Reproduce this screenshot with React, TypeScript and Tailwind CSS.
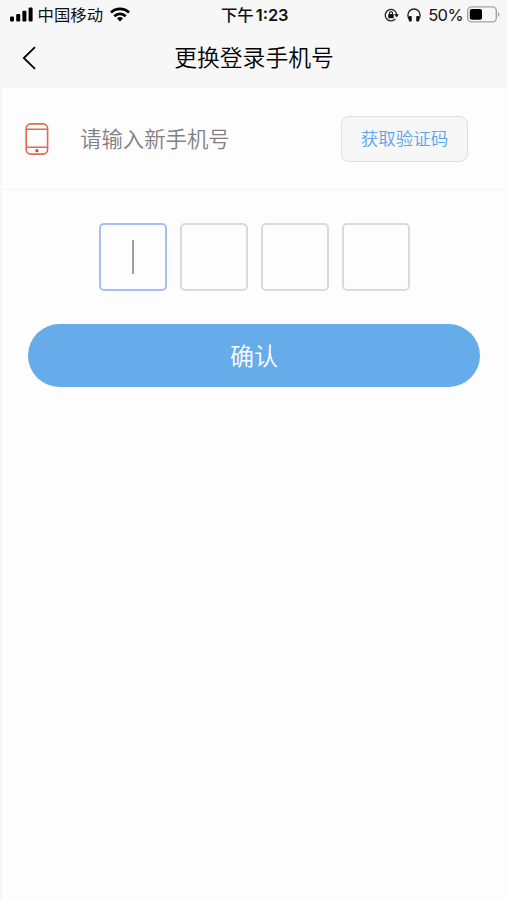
import { useState } from 'react';

const CODE_LENGTH = 4;

const SignalIcon = () => (
  <svg className="w-[23px] h-[15px]" viewBox="0 0 23 15" fill="#000">
    <rect x="0" y="9.5" width="4" height="5" rx="1" />
    <rect x="6.2" y="7" width="4" height="7.5" rx="1" />
    <rect x="12.4" y="3.8" width="4" height="10.7" rx="1" />
    <rect x="18.6" y="0.5" width="4" height="14" rx="1" />
  </svg>
);

const WifiIcon = () => (
  <svg className="w-5 h-[15px]" viewBox="0 0 20 15" fill="none" stroke="#000" strokeWidth="2.8">
    <path d="M1 5.6a12.8 12.8 0 0 1 18 0" />
    <path d="M4.3 9.2a8.2 8.2 0 0 1 11.4 0" />
    <path d="M10 14.4l-3-3a4.3 4.3 0 0 1 6 0z" fill="#000" stroke="none" />
  </svg>
);

const RotationLockIcon = () => (
  <svg className="w-[15px] h-[14px]" viewBox="0 0 15 14" fill="none" stroke="#222" strokeWidth="1.3">
    <path d="M11.3 10.9a5.7 5.7 0 1 1 1.4-3.9" />
    <path d="M10.2 6.2h4.6l-2.2 3.4z" fill="#111" stroke="none" />
    <rect x="4.3" y="6" width="5.4" height="4.2" rx="0.5" fill="#111" stroke="none" />
    <path d="M5.5 6.5V5.1a1.5 1.5 0 0 1 3 0v1.4" strokeWidth="1.1" />
  </svg>
);

const HeadphonesIcon = () => (
  <svg className="w-[14px] h-[14px]" viewBox="0 0 14 14" fill="none" stroke="#222" strokeWidth="1.4">
    <path d="M2.6 11.5C1.4 10.3.9 8.8.9 7.2a6.1 6.2 0 0 1 12.2 0c0 1.6-.5 3.1-1.7 4.3" />
    <rect x="1.8" y="8" width="3" height="5.4" rx="1" fill="#111" stroke="none" />
    <rect x="9.2" y="8" width="3" height="5.4" rx="1" fill="#111" stroke="none" />
  </svg>
);

const BatteryIcon = () => (
  <svg className="w-[33px] h-[17px]" viewBox="0 0 33 17" fill="none">
    <rect x="0.7" y="0.9" width="28.6" height="15" rx="4" stroke="#a3a3a3" strokeWidth="1.4" />
    <rect x="2.8" y="3" width="12.2" height="10.8" rx="2" fill="#000" />
    <path d="M30.8 6v4.8c1-.4 1.6-1.3 1.6-2.4S31.8 6.4 30.8 6z" fill="#a3a3a3" />
  </svg>
);

const BackIcon = () => (
  <svg className="w-[14px] h-6" viewBox="0 0 14 24" fill="none" stroke="#000" strokeWidth="1.8">
    <path d="M13 1.2L1.8 12L13 22.8" />
  </svg>
);

const PhoneIcon = () => (
  <svg className="w-6 h-8" viewBox="0 0 24 32" fill="none" stroke="#de6b4e" strokeWidth="1.6">
    <rect x="1.2" y="0.9" width="21.4" height="30.2" rx="4.6" />
    <path d="M1.2 6.3h21.4M1.2 24.2h21.4" />
    <circle cx="11.9" cy="27.7" r="1.6" fill="#d8492b" stroke="none" />
  </svg>
);

const StatusBar = () => (
  <div className="grid grid-cols-[1fr_auto_1fr] items-center h-[29px] pl-[7.5px] pr-[7px] text-[16.4px] leading-none text-[#111]">
    <div className="flex items-center">
      <SignalIcon />
      <span className="ml-[5px] pt-[2px]">中国移动</span>
      <span className="ml-[7px]">
        <WifiIcon />
      </span>
    </div>
    <div className="flex items-center gap-[2px] pt-[2px] font-medium">
      <span>下午</span>
      <span className="font-semibold">1:23</span>
    </div>
    <div className="flex items-center justify-end">
      <RotationLockIcon />
      <span className="ml-[8px]">
        <HeadphonesIcon />
      </span>
      <span className="ml-[7px] mr-[4px] pt-[2px] text-[16.5px] tracking-[-0.6px]">50%</span>
      <BatteryIcon />
    </div>
  </div>
);

export default function App() {
  const [phone, setPhone] = useState('');
  const [code, setCode] = useState('');

  return (
    <div className="w-full h-[900px] bg-[#fdfdfd] border-l-2 border-[#f7f7f7] font-['Inter','Noto_Sans_CJK_SC',sans-serif]">
      <header className="h-[88px] bg-[#f7f7f7]">
        <StatusBar />
        <div className="grid grid-cols-[60px_1fr_60px] items-center h-[58px]">
          <button className="pl-5" aria-label="返回">
            <BackIcon />
          </button>
          <h1 className="pt-px pr-px text-center text-[22.8px] leading-none font-[350] text-black">更换登录手机号</h1>
        </div>
      </header>

      <div className="flex items-center h-[102px] pl-[23px] pr-[39px] border-b border-[#f5f5f5]">
        <PhoneIcon />
        <input
          type="tel"
          value={phone}
          onChange={(e) => setPhone(e.target.value)}
          placeholder="请输入新手机号"
          className="flex-1 min-w-0 ml-[31px] pt-[2px] text-[21.4px] font-[350] text-[#333] placeholder-[#808080] outline-none"
        />
        <button className="w-[127px] h-[46px] pt-[2px] rounded-[8px] border-[1.5px] border-[#e0e0e0] bg-[#f7f7f7] text-[17.5px] font-[350] text-[#5ba5e8]">
          获取验证码
        </button>
      </div>

      <label className="relative flex justify-center gap-[13px] mt-[33px] mr-px">
        {Array.from({ length: CODE_LENGTH }, (_, i) => (
          <span
            key={i}
            className={
              i === code.length
                ? 'flex items-center justify-center w-[68px] h-[68px] rounded-[5px] border-2 border-[#a5bff3] text-2xl'
                : 'flex items-center justify-center w-[68px] h-[68px] rounded-[5px] border-2 border-[#dadada] text-2xl'
            }
          >
            {i === code.length ? <span className="w-[2px] h-[34px] bg-[#a0a0a0]" /> : code[i]}
          </span>
        ))}
        <input
          inputMode="numeric"
          maxLength={CODE_LENGTH}
          value={code}
          onChange={(e) => setCode(e.target.value)}
          className="absolute inset-0 opacity-0"
        />
      </label>

      <button className="block w-[452px] h-[63px] mt-[33px] ml-[26px] pt-[3px] rounded-full bg-[#66abea] text-2xl font-[350] text-white">
        确认
      </button>
    </div>
  );
}
